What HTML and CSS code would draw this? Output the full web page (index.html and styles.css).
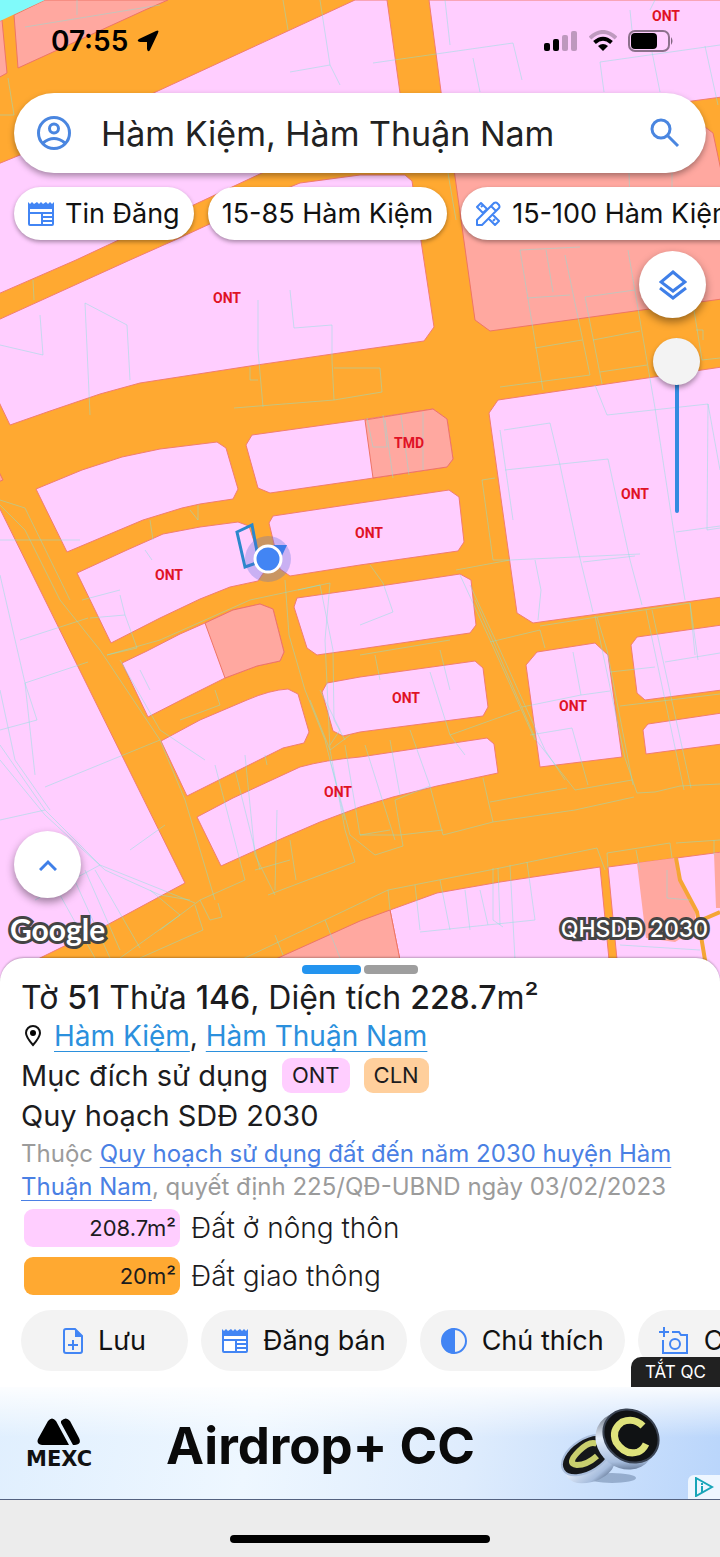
FILE: index.html
```html
<!DOCTYPE html>
<html lang="vi">
<head>
    <meta charset="utf-8">
    <meta name="viewport" content="width=device-width, initial-scale=1">
    <title>Hàm Kiệm, Hàm Thuận Nam</title>
    <link rel="stylesheet" href="styles.css">
</head>
<body>
    <svg class="symbols" aria-hidden="true">
        <symbol id="icon-news" viewBox="0 0 26 24">
            <path fill="currentColor" d="M0 0l2 2 2-2 2 2 3-2 2 2 2-2 2 2 3-2 2 2 2-2 2 2 2-2v22a2 2 0 0 1-2 2H2a2 2 0 0 1-2-2z"/>
            <path fill="#fff" d="M2 7h22v3H2zM2 12h11v10H2zM15 12h9v2h-9zM15 16h9v2h-9zM15 20h9v2h-9z"/>
        </symbol>
    </svg>

    <main class="app">
        <section class="map">
            <svg class="map-canvas" viewBox="0 0 720 978" preserveAspectRatio="xMidYMin slice">
                <rect width="720" height="978" fill="#ffa931"/>

                <!-- residential land -->
                <g class="ont">
                    <path d="M355 0H387L400 93L408 150L30 150Z"/>
                    <path d="M429 0H722V97L692 101L448 145Z"/>
                    <path d="M-2 164L20 155L120 110L340 110L262 173L76 260L-2 294Z"/>
                    <path d="M-2 320L130 260L175 240L290 187L300 183L360 175H405L412 181L434 327L424 341L360 350L250 366L140 383L100 394L50 411L10 425L-2 400Z"/>
                    <path d="M489 413L498 400L722 367V597L533 623L517 613Z"/>
                    <path d="M36 489L82 470L122 457L160 449L217 442L226 448L238 489L233 499L200 504L182 508L143 520L67 552Z"/>
                    <path d="M252 435L360 420L433 409L447 419L453 459L447 467L360 480L270 493L258 488L246 445Z"/>
                    <path d="M77 573L127 550L163 534L200 527L238 522L249 526L264 572L258 581L230 587L200 599L160 618L111 643Z"/>
                    <path d="M273 516L360 503L449 490L459 497L464 542L458 551L360 565L290 576L280 569L269 523Z"/>
                    <path d="M297 598L360 589L460 574L471 580L476 625L470 633L360 649L317 655L307 648L294 607Z"/>
                    <path d="M122 663L147 651L180 634L205 623L233 610L260 604L273 609L284 652L280 661L257 666L225 678L187 697L148 717Z"/>
                    <path d="M161 741L200 720L247 700Q270 690 288 689L298 694L309 732L304 743L283 748L247 766L187 796Z"/>
                    <path d="M327 683L360 677L475 661L483 668L488 707L483 716L360 732L343 736L333 731L322 692Z"/>
                    <path d="M197 817L233 798L300 767Q325 760 360 757L487 738L494 744L498 773L437 786L393 797L360 807L320 822L283 838L221 866Z"/>
                    <path d="M537 652L595 643L608 655L622 757L540 767L526 665Z"/>
                    <path d="M637 637L722 625V690L645 700L637 693L631 645Z"/>
                    <path d="M648 724L722 713V744L646 754L643 730Z"/>
                    <path d="M-2 505L185 883L107 925L40 958L-2 980Z"/>
                    <path d="M390 910L437 893L500 882L600 867L611 980H404Z"/>
                    <path d="M608 867L722 852V980H619Z"/>
                </g>

                <!-- commercial land -->
                <g class="tmd">
                    <path d="M14 15L45 0H168L145 10L18 68Z"/>
                    <path d="M-2 22L2 20L7 73L-2 78Z"/>
                    <path d="M452 155L705 127L713 133L722 175V299L490 331L475 320Z"/>
                    <path d="M365 420L433 409L447 419L453 459L447 467L373 478Z"/>
                    <path d="M205 623L233 610L260 604L273 609L284 652L280 661L257 666L225 678Z"/>
                    <path d="M240 980L278 958L360 921L390 910L404 980Z"/>
                    <path d="M-2 470L3 480L-2 482Z"/>
                </g>
                <path fill="#ffa8a0" d="M637 863L675 858L677 873L695 912V930L675 942L646 938ZM714 853H720V908H716Z"/>
                <path fill="#80fafa" d="M0 0H45L0 21Z"/>
                <path class="lane" d="M676 858L680 880L697 912L700 930L708 978M697 922L720 912"/>

                <!-- cadastral lines -->
                <g class="parcels">
                    <path d="M25 27L160 5M77 0V15M283 0L288 30M320 0L330 65L290 72M330 65L340 85M8 78L14 115L0 115"/>
                    <path d="M445 0L450 45M373 63L513 43L522 80M473 58L480 92M600 62L720 45M600 62L604 92M630 10L632 30M652 52L660 92M705 46L718 105M655 0L650 10"/>
                    <path d="M448 173L456 220M520 250L543 390M520 250L580 247M546 250L553 292M527 298L570 295M565 255L590 375L500 387M535 348L582 340M585 297L602 384M585 297L635 290M593 340L640 331M600 372L647 365M628 250L655 408M629 173L631 230M672 173V235M694 310L702 360L720 358M696 330H703V340"/>
                    <path d="M85 303L90 415M85 303L127 325L130 380M258 300V350L263 407M290 290L294 328L332 325V360L334 400M250 367V380H258M234 408L334 400L382 392L380 368L334 368M40 315L43 355L0 345M33 280L34 300"/>
                    <path d="M367 418L373 447L387 447L383 415M385 420L393 478M401 415L409 475M423 412V470"/>
                    <path d="M500 430L513 520M504 430L550 423L560 465L578 550L593 612M505 470L608 459L630 560L642 605M595 385L607 415L708 404L720 470M655 408L675 540L685 600M708 404L707 530L720 528M676 532L720 526M510 560L640 554M535 560L541 590L538 620M583 562L635 556"/>
                    <path d="M482 480L493 560L510 560M482 480L495 478M370 565L383 583L393 612L360 625M456 570L510 560M460 575L490 640L535 740M475 600L536 740L575 790M470 585L500 650L545 750L565 780M490 642L540 630L545 648M540 626L597 617L607 650L633 785M595 616L625 758L637 793L655 792L680 786L720 784"/>
                    <path d="M597 617L690 603L698 660M646 610L684 790M652 610L691 788M690 603L695 655M665 662L720 653M610 672L655 667M620 706L720 694M573 652L581 695L522 707M581 695L610 691M530 735L572 728L588 785"/>
                    <path d="M0 505L25 530L60 600L100 650L160 740L185 800L215 900M0 500L25 508L70 600M0 540L80 540M20 640L88 618M25 683L88 662M25 683L37 720L0 730M0 575L25 683L35 775"/>
                    <path d="M82 600L120 590M90 618L125 615L137 648L107 655M125 615L120 595M107 655L160 640L250 600L330 583L325 640L330 750L345 830L355 862L268 895M285 580L289 635L305 690L325 740L345 820M298 590L320 585L333 650L334 720L345 740"/>
                    <path d="M145 550L152 560M150 520L153 540M190 510L198 520V505M140 670L150 690M180 720L220 705L215 690M120 660L160 730L205 760M310 700L330 750L350 735M320 690L340 730L330 745"/>
                    <path d="M330 760L350 835L375 855L403 846L395 800L430 786L443 835L493 822L483 778M345 745L360 835L390 830M365 745L395 840M390 740L400 795M410 730L430 786M440 650L450 690M450 640L360 655M375 655L380 680M430 672L450 735L520 710M450 735L465 755M490 802L567 788M493 822L575 810L634 797M575 790L632 780M360 835L400 835L443 830"/>
                    <path d="M215 765L245 880M235 770L260 870M265 755L267 765M245 755L255 855L275 895M245 880L200 900L210 920L222 917L218 903M160 930L200 900M195 905L203 930L140 958M150 890L180 915L120 958M277 810L275 890M290 840L296 880M255 870L290 860"/>
                    <path d="M0 745L45 810L100 865L150 885L195 903M0 760L45 815L105 870L160 895L190 900M0 690L15 760L50 810M0 820L45 810M45 787L160 740M35 900L100 865M70 870L110 958M85 870L120 950M95 870L140 948M60 895L95 958M130 850L165 825"/>
                    <path d="M230 965L325 920L388 890L500 868L597 848L605 870M325 920L340 958M275 935L283 955M388 890L390 910M415 885L420 930M440 880L450 930M493 868V920L503 927M498 868L500 925M510 865L515 960M527 862L535 920L420 932M607 853L670 843L672 858M636 850L640 870M676 843L720 840M714 840V855M607 853L608 868M465 890L470 930M480 890L488 925M667 870V898L690 900M620 945L700 950"/>
                </g>

                <g class="map-labels">
                    <text x="666" y="21">ONT</text>
                    <text x="227" y="303">ONT</text>
                    <text x="409" y="448">TMD</text>
                    <text x="635" y="499">ONT</text>
                    <text x="369" y="538">ONT</text>
                    <text x="169" y="580">ONT</text>
                    <text x="406" y="703">ONT</text>
                    <text x="573" y="711">ONT</text>
                    <text x="338" y="797">ONT</text>
                </g>

                <!-- selected parcel and current position -->
                <path fill="none" stroke="#2b88cc" stroke-width="3" d="M237 532L252 525L259 562L245 567Z"/>
                <circle cx="268" cy="559" r="23" fill="#4b6bd6" fill-opacity=".3"/>
                <path fill="#3d7be8" d="M273 545H287L280 560Z"/>
                <circle cx="268" cy="559" r="13" fill="#4285f4" stroke="#fff" stroke-width="3"/>
            </svg>

            <header class="status-bar">
                <span class="clock">07:55</span>
                <svg width="24" height="24" viewBox="0 0 24 24"><path d="M22 2Q23 1 22 4L14 21Q12 24 11 20V13H4Q0 12 3 10L20 2Q22 1 22 2Z"/></svg>
                <span class="status-icons">
                    <svg width="34" height="22" viewBox="0 0 34 22"><rect x="0" y="13" width="6" height="8" rx="2"/><rect x="9" y="9" width="6" height="12" rx="2"/><g opacity=".25"><rect x="18" y="5" width="6" height="16" rx="2"/><rect x="27" y="1" width="6" height="20" rx="2"/></g></svg>
                    <svg width="28" height="22" viewBox="0 0 28 22" fill="none" stroke="#000" stroke-width="4"><path opacity=".25" d="M1 8Q14-4 27 8"/><path d="M5.500 12.500Q14 5 22.500 12.500"/><path fill="#000" stroke="none" d="M9 16Q14 12 19 16L14 21Z"/></svg>
                    <svg width="46" height="22" viewBox="0 0 46 22"><rect x="1" y="1" width="40" height="20" rx="6" fill="none" stroke="#000" stroke-opacity=".45" stroke-width="2"/><rect x="3" y="3" width="26" height="16" rx="4"/><path opacity=".5" d="M43 7Q46 11 43 15Z"/></svg>
                </span>
            </header>

            <form class="search">
                <svg width="34" height="34" viewBox="0 0 34 34" fill="none" stroke="#4a86e0" stroke-width="3"><circle cx="17" cy="17" r="15.500"/><circle cx="17" cy="12.500" r="4.500"/><path d="M6 27Q17 18 28 27"/></svg>
                <input type="text" aria-label="Tìm kiếm" value="Hàm Kiệm, Hàm Thuận Nam">
                <button type="button" aria-label="Tìm">
                    <svg width="30" height="30" viewBox="0 0 30 30" fill="none" stroke="#4a86e0" stroke-width="3"><circle cx="11" cy="11" r="9"/><path d="M18 18L28 28"/></svg>
                </button>
            </form>

            <nav class="chips">
                <button type="button"><svg class="blue" width="26" height="24"><use href="#icon-news"/></svg>Tin Đăng</button>
                <button type="button">15-85 Hàm Kiệm</button>
                <button type="button"><svg width="26" height="26" viewBox="0 0 26 26" fill="none" stroke="#4285f4" stroke-width="2" stroke-linejoin="round"><path d="M6 2L2 6L8 12L12 8ZM14 18L20 24L24 20L18 14M8 4L6 6M20 18L18 20M2 24V19L19 2Q21 1 22 2L24 4Q25 6 24 7L7 24ZM16 5L21 10"/></svg>15-100 Hàm Kiệm</button>
            </nav>

            <div class="controls">
                <button type="button" class="round" aria-label="Lớp bản đồ">
                    <svg width="28" height="30" viewBox="0 0 28 30" fill="none" stroke="#3f7fe8" stroke-width="3"><path d="M14 2L26 12L14 21L2 12Z"/><path d="M1 18L14 28L27 18"/></svg>
                </button>
                <input class="opacity" type="range" min="0" max="100" value="0" aria-label="Độ mờ">
            </div>

            <div class="map-footer">
                <button type="button" class="round" aria-label="Mở rộng">
                    <svg width="18" height="12" viewBox="0 0 18 12" fill="none" stroke="#3f7fe8" stroke-width="3"><path d="M1 11L9 3L17 11"/></svg>
                </button>
                <div class="credits">
                    <span class="google">Google</span>
                    <span class="layer-name">QHSDĐ 2030</span>
                </div>
            </div>
        </section>

        <section class="sheet">
            <div class="pager"><span class="active"></span><span></span></div>
            <h1>Tờ <b>51</b> Thửa <b>146</b>, Diện tích <b>228.7</b>m²</h1>
            <p class="place">
                <svg width="16" height="22" viewBox="0 0 16 22"><path fill="none" stroke="#111" stroke-width="2" d="M8 20Q1 12 1 8A7 7 0 0 1 15 8Q15 12 8 20Z"/><circle cx="8" cy="8" r="3"/></svg>
                <span><a href="#">Hàm Kiệm</a>, <a href="#">Hàm Thuận Nam</a></span>
            </p>
            <p class="purpose">Mục đích sử dụng <span class="tag pink">ONT</span><span class="tag peach">CLN</span></p>
            <p class="plan">Quy hoạch SDĐ 2030</p>
            <p class="source">Thuộc <a href="#">Quy hoạch sử dụng đất đến năm 2030 huyện Hàm Thuận Nam</a>, quyết định 225/QĐ-UBND ngày 03/02/2023</p>
            <ul class="areas">
                <li><span class="area pink">208.7m²</span>Đất ở nông thôn</li>
                <li><span class="area orange">20m²</span>Đất giao thông</li>
            </ul>
            <div class="actions">
                <button type="button" class="save"><svg width="20" height="26" viewBox="0 0 20 26"><path fill="none" stroke="#4285f4" stroke-width="2" d="M1 3Q1 1 3 1H12L19 8V23Q19 25 17 25H3Q1 25 1 23Z"/><path fill="#4285f4" d="M12 1L20 9H12Z"/><path fill="none" stroke="#4285f4" stroke-width="2" d="M5 17H15M10 12V22"/></svg>Lưu</button>
                <button type="button"><svg class="blue" width="26" height="24"><use href="#icon-news"/></svg>Đăng bán</button>
                <button type="button"><svg width="26" height="26" viewBox="0 0 26 26"><circle cx="13" cy="13" r="12" fill="none" stroke="#4285f4" stroke-width="2"/><path fill="#4285f4" d="M14 0V26A13 13 0 0 1 14 0Z"/></svg>Chú thích</button>
                <button type="button"><svg width="30" height="28" viewBox="0 0 30 28" fill="none" stroke="#4285f4" stroke-width="2"><path d="M5 0V10M0 5H10M4 13V26H28V8H22L20 5H13"/><circle cx="16" cy="17" r="5"/></svg>Chụp ảnh</button>
            </div>
        </section>

        <aside class="ad">
            <button type="button" class="ad-off">TẮT QC</button>
            <div class="brand">
                <svg width="44" height="28" viewBox="0 0 44 28"><path d="M11 3Q15-2 19 3L32 27H5Q-1 26 1 21ZM24 3Q29-2 33 3L42 20Q45 26 38 27H36L24 5Z"/></svg>
                <span>MEXC</span>
            </div>
            <strong>Airdrop+ CC</strong>
            <svg class="coins" width="102" height="78" viewBox="0 0 102 78">
                <defs>
                    <linearGradient id="rim" x1="0" y1="0" x2="1" y2="1">
                        <stop offset="0" stop-color="#303a4a"/><stop offset=".45" stop-color="#e5eefb"/><stop offset=".75" stop-color="#a7bddd"/><stop offset="1" stop-color="#1c2c46"/>
                    </linearGradient>
                </defs>
                <ellipse cx="52" cy="70" rx="24" ry="5" fill="#3a5277" opacity=".35"/>
                <path fill="url(#rim)" d="M1 56L8 70Q15 78 32 74Q52 68 55 54L48 30Z"/>
                <ellipse cx="27" cy="47" rx="28" ry="16" transform="rotate(-33 27 47)" fill="#15171a" stroke="#a9bddb" stroke-width="2"/>
                <path fill="none" stroke="#c9cf6e" stroke-width="6" d="M37 36Q30 32 19 43Q6 56 17 57Q27 57 37 48"/>
                <ellipse cx="65" cy="33" rx="31" ry="27" transform="rotate(38 65 33)" fill="url(#rim)"/>
                <ellipse cx="71" cy="28" rx="29" ry="25" transform="rotate(38 71 28)" fill="#101214" stroke="#3a4352" stroke-width="2"/>
                <path fill="none" stroke="#dfe37c" stroke-width="7" d="M83 18Q74 9 62 14Q51 22 56 34Q65 48 78 44Q83 42 86 36"/>
            </svg>
            <a class="adchoices" href="#" aria-label="AdChoices"><svg width="20" height="20" viewBox="0 0 20 20" fill="none" stroke="#18a5b8" stroke-width="2"><path d="M2 1L18 10L2 19Z"/><path d="M8 9V15M8 6V8"/></svg></a>
        </aside>
        <footer class="home"><span></span></footer>
    </main>
</body>
</html>
```

FILE: styles.css
```css
* {
    box-sizing: border-box;
}

body {
    margin: 0;
    font-family: Inter, "Noto Sans", sans-serif;
    color: #1c1c1e;
    background: #fff;
}

h1, p, ul {
    margin: 0;
    padding: 0;
    font-weight: 400;
}

button {
    font: inherit;
    color: inherit;
    border: none;
    background: none;
    padding: 0;
    cursor: pointer;
}

svg {
    flex-shrink: 0;
}

.symbols {
    position: absolute;
    width: 0;
    height: 0;
}

.blue {
    color: #4285f4;
}

.app {
    display: flex;
    flex-direction: column;
    min-height: 100vh;
    overflow: hidden;
}

/* map */

.map {
    position: relative;
    flex: 1;
    display: flex;
    flex-direction: column;
    min-height: 800px;
    padding-bottom: 30px;
}

.map-canvas {
    position: absolute;
    inset: 0;
    width: 100%;
    height: 100%;
}

.map > :not(.map-canvas) {
    position: relative;
}

.ont path {
    fill: #ffceff;
    stroke: #f27d70;
    stroke-width: 1;
}

.tmd path {
    fill: #ffa8a0;
    stroke: #ee7566;
    stroke-width: 1;
}

.lane {
    fill: none;
    stroke: #f5a535;
    stroke-width: 4;
}

.parcels path {
    fill: none;
    stroke: #80e4dc;
    stroke-opacity: .45;
    stroke-width: 1;
}

.map-labels {
    font: 700 14px Roboto, sans-serif;
    fill: #e01225;
    text-anchor: middle;
}

.status-bar {
    display: flex;
    align-items: center;
    height: 93px;
    padding: 0 46px 11px 51px;
    gap: 8px;
    color: #000;
}

.clock {
    font-size: 28px;
    font-weight: 600;
}

.status-icons {
    display: flex;
    gap: 11px;
    margin-left: auto;
}

.search {
    display: flex;
    align-items: center;
    height: 80px;
    margin: 0 14px;
    padding: 0 26px 0 23px;
    border-radius: 40px;
    background: #fff;
    box-shadow: 0 3px 6px rgba(0, 0, 0, .35);
}

.search input {
    flex: 1;
    min-width: 0;
    margin: 0 20px 0 30px;
    padding: 0;
    border: none;
    outline: none;
    font: inherit;
    font-size: 34px;
    color: #222;
}

.search button {
    display: flex;
}

.chips {
    display: flex;
    gap: 14px;
    padding: 14px 0 11px 14px;
}

.chips button {
    display: flex;
    align-items: center;
    flex-shrink: 0;
    gap: 11px;
    height: 53px;
    padding: 0 14px;
    border-radius: 27px;
    background: #fff;
    color: #111;
    font-size: 27px;
    white-space: nowrap;
    box-shadow: 0 2px 4px rgba(0, 0, 0, .35);
}

.controls {
    display: flex;
    flex-direction: column;
    align-items: flex-end;
    gap: 20px;
    padding-right: 14px;
}

.round {
    display: flex;
    align-items: center;
    justify-content: center;
    width: 67px;
    height: 67px;
    border-radius: 50%;
    background: #fff;
    box-shadow: 0 4px 8px rgba(0, 0, 0, .4);
}

.opacity {
    appearance: none;
    writing-mode: vertical-lr;
    width: 47px;
    height: 175px;
    margin: 0 6px 0 0;
    background: none;
}

.opacity::-webkit-slider-runnable-track {
    width: 4px;
    height: 100%;
    border-radius: 2px;
    background: #338be0;
}

.opacity::-webkit-slider-thumb {
    appearance: none;
    width: 47px;
    height: 47px;
    margin-left: -22px;
    border-radius: 50%;
    background: #f3f3f3;
    box-shadow: 0 3px 5px rgba(0, 0, 0, .35);
}

.map-footer {
    margin-top: auto;
    padding: 0 12px 0 14px;
}

.credits {
    display: flex;
    align-items: center;
    justify-content: space-between;
    height: 50px;
    margin-left: -4px;
    padding-top: 12px;
    color: #fff;
    -webkit-text-stroke: 6px #444;
    paint-order: stroke fill;
}

.google {
    font-family: Lato, sans-serif;
    font-size: 30px;
    font-weight: 700;
}

.layer-name {
    font-size: 23px;
    font-weight: 500;
}

/* parcel details */

.sheet {
    position: relative;
    display: flex;
    flex-direction: column;
    margin-top: -20px;
    padding: 7px 21px 16px;
    border-radius: 24px 24px 0 0;
    background: #fff;
    box-shadow: 0 -1px 2px rgba(0, 0, 0, .25);
}

.pager {
    display: flex;
    justify-content: center;
    gap: 3px;
}

.pager span {
    width: 54px;
    height: 9px;
    border-radius: 4px;
    background: #9e9e9e;
}

.pager .active {
    width: 59px;
    background: #2394ef;
}

.sheet h1 {
    font-size: 32px;
    line-height: 44px;
    padding-top: 2px;
}

.sheet b {
    font-weight: 500;
}

.place {
    display: flex;
    align-items: center;
    gap: 13px;
    padding-left: 4px;
    font-size: 28px;
    line-height: 32px;
}

.place a {
    color: #2b90dd;
}

.sheet a {
    text-decoration-thickness: 1px;
    text-underline-offset: 5px;
    text-decoration-skip-ink: none;
}

.purpose {
    display: flex;
    align-items: center;
    gap: 14px;
    height: 46px;
    font-size: 29px;
}

.tag {
    height: 35px;
    padding: 0 10px;
    border-radius: 9px;
    font-size: 22px;
    line-height: 35px;
}

.pink {
    background: #ffceff;
}

.peach {
    background: #ffcf9c;
}

.orange {
    background: #ffa931;
}

.plan {
    font-size: 29px;
    line-height: 36px;
}

.source {
    padding: 3px 0 6px;
    font-size: 24px;
    line-height: 33px;
    color: #9b9b9b;
}

.source a {
    color: #4a80e4;
}

.areas {
    display: flex;
    flex-direction: column;
    gap: 10px;
    list-style: none;
}

.areas li {
    display: flex;
    align-items: center;
    gap: 11px;
    padding-left: 3px;
    font-size: 28px;
    font-weight: 300;
}

.area {
    width: 156px;
    padding-right: 4px;
    border-radius: 9px;
    font-size: 22px;
    font-weight: 400;
    line-height: 38px;
    text-align: right;
}

.actions {
    display: flex;
    gap: 13px;
    margin: 15px -21px 0 0;
    overflow: hidden;
}

.actions button {
    display: flex;
    align-items: center;
    flex-shrink: 0;
    gap: 15px;
    height: 61px;
    padding: 0 21px;
    border-radius: 31px;
    background: #f3f3f3;
    font-size: 27px;
    color: #111;
    white-space: nowrap;
}

.actions .save {
    padding: 0 42px;
}

/* banner */

.ad {
    position: relative;
    display: flex;
    align-items: center;
    height: 113px;
    padding: 0 58px 0 26px;
    border-bottom: 1px solid #53617f;
    background: linear-gradient(to bottom, rgba(255, 255, 255, .9), rgba(255, 255, 255, 0) 45%), linear-gradient(100deg, #e0effe, #eef7ff 35%, #deecfd 65%, #b9d5fb);
}

.ad-off {
    position: absolute;
    right: 0;
    bottom: 100%;
    height: 30px;
    padding: 0 14px;
    border-radius: 10px 0 0 0;
    background: #212121;
    color: #fff;
    font-size: 17px;
}

.brand {
    display: flex;
    flex-direction: column;
    align-items: center;
    padding-top: 4px;
    font: 700 21px/26px "DejaVu Sans", sans-serif;
    color: #111;
}

.ad strong {
    margin-left: 74px;
    padding-top: 4px;
    font-size: 51px;
    font-weight: 700;
    color: #0a0a0a;
}

.coins {
    margin-left: auto;
    margin-top: 8px;
}

.adchoices {
    position: absolute;
    right: 0;
    bottom: 0;
    display: flex;
    padding: 2px 6px;
    border-radius: 6px 0 0 0;
    background: #eef6ff;
}

.home {
    display: flex;
    justify-content: center;
    height: 57px;
    padding-top: 35px;
    background: #ececec;
}

.home span {
    width: 36%;
    height: 8px;
    border-radius: 4px;
    background: #000;
}
```
